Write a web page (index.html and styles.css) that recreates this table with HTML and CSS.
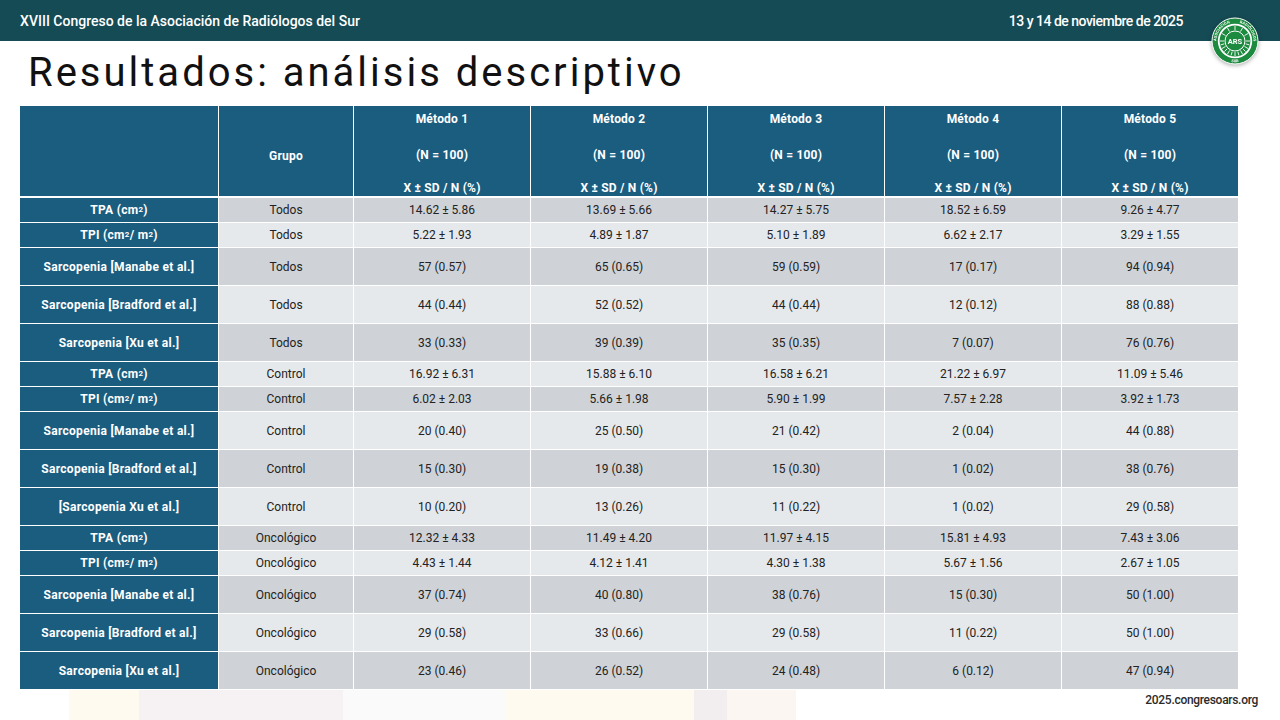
FILE: index.html
```html
<!DOCTYPE html>
<html lang="es">
<head>
<meta charset="utf-8">
<title>Resultados: análisis descriptivo</title>
<link rel="stylesheet" href="styles.css">
</head>
<body>
<div class="slide">
  <header class="topbar">
    <span class="congress">XVIII Congreso de la Asociación de Radiólogos del Sur</span>
    <span class="date">13 y 14 de noviembre de 2025</span>
  </header>
  <svg class="logo" viewBox="0 0 50 50" width="50" height="50">
    <defs>
      <path id="arcTop" d="M 7.52 31.36 A 18.6 18.6 0 1 1 42.48 31.36"/>
      <path id="arcBot" d="M 3.8 25 A 21.2 21.2 0 0 0 46.2 25"/>
    </defs>
    <circle cx="25" cy="25" r="23" fill="#1c8a3f" stroke="#ffffff" stroke-width="1"/>
    <circle cx="25" cy="25" r="16.3" fill="none" stroke="#ffffff" stroke-width="1.8"/>
    <g stroke="#ffffff" stroke-width="0.9">
      <line x1="25" y1="14" x2="25" y2="10"/>
      <line x1="30.5" y1="15.5" x2="32.5" y2="12"/>
      <line x1="34.5" y1="19.5" x2="38" y2="17.5"/>
      <line x1="36" y1="25" x2="40" y2="25"/>
      <line x1="34.5" y1="30.5" x2="38" y2="32.5"/>
      <line x1="30.5" y1="34.5" x2="32.5" y2="38"/>
      <line x1="25" y1="36" x2="25" y2="40"/>
      <line x1="19.5" y1="34.5" x2="17.5" y2="38"/>
      <line x1="15.5" y1="30.5" x2="12" y2="32.5"/>
      <line x1="14" y1="25" x2="10" y2="25"/>
      <line x1="15.5" y1="19.5" x2="12" y2="17.5"/>
      <line x1="19.5" y1="15.5" x2="17.5" y2="12"/>
      <line x1="27.8" y1="35.6" x2="28.9" y2="39.4"/>
      <line x1="22.2" y1="35.6" x2="21.1" y2="39.4"/>
      <line x1="32.8" y1="32.8" x2="35.6" y2="35.6"/>
      <line x1="17.2" y1="32.8" x2="14.4" y2="35.6"/>
      <line x1="35.6" y1="27.8" x2="39.4" y2="28.9"/>
      <line x1="14.4" y1="27.8" x2="10.6" y2="28.9"/>
    </g>
    <circle cx="25" cy="25" r="10" fill="#1c8a3f" stroke="#ffffff" stroke-width="1"/>
    <text x="25" y="27.8" class="logo-ars">ARS</text>
    <text class="logo-ring"><textPath href="#arcTop" startOffset="26%">ASOCIACIÓN</textPath></text>
    <text class="logo-ring"><textPath href="#arcTop" startOffset="74%">RADIÓLOGOS</textPath></text>
    <text class="logo-ring"><textPath href="#arcBot" startOffset="50%">SUR</textPath></text>
  </svg>

  <h1 class="title">Resultados: análisis descriptivo</h1>

  <div class="table">
    <div class="row head">
      <div class="cell"></div>
      <div class="cell grupo">Grupo</div>
      <div class="cell method"><span>Método 1</span><span>(N = 100)</span><span>X ± SD / N (%)</span></div>
      <div class="cell method"><span>Método 2</span><span>(N = 100)</span><span>X ± SD / N (%)</span></div>
      <div class="cell method"><span>Método 3</span><span>(N = 100)</span><span>X ± SD / N (%)</span></div>
      <div class="cell method"><span>Método 4</span><span>(N = 100)</span><span>X ± SD / N (%)</span></div>
      <div class="cell method"><span>Método 5</span><span>(N = 100)</span><span>X ± SD / N (%)</span></div>
    </div>
    <div class="body">
      <div class="row s"><div class="cell label">TPA (cm<sup>2</sup>)</div><div class="cell">Todos</div><div class="cell">14.62 ± 5.86</div><div class="cell">13.69 ± 5.66</div><div class="cell">14.27 ± 5.75</div><div class="cell">18.52 ± 6.59</div><div class="cell">9.26 ± 4.77</div></div>
      <div class="row s"><div class="cell label">TPI (cm<sup>2</sup>/ m<sup>2</sup>)</div><div class="cell">Todos</div><div class="cell">5.22 ± 1.93</div><div class="cell">4.89 ± 1.87</div><div class="cell">5.10 ± 1.89</div><div class="cell">6.62 ± 2.17</div><div class="cell">3.29 ± 1.55</div></div>
      <div class="row l"><div class="cell label">Sarcopenia [Manabe et al.]</div><div class="cell">Todos</div><div class="cell">57 (0.57)</div><div class="cell">65 (0.65)</div><div class="cell">59 (0.59)</div><div class="cell">17 (0.17)</div><div class="cell">94 (0.94)</div></div>
      <div class="row l"><div class="cell label">Sarcopenia [Bradford et al.]</div><div class="cell">Todos</div><div class="cell">44 (0.44)</div><div class="cell">52 (0.52)</div><div class="cell">44 (0.44)</div><div class="cell">12 (0.12)</div><div class="cell">88 (0.88)</div></div>
      <div class="row l"><div class="cell label">Sarcopenia [Xu et al.]</div><div class="cell">Todos</div><div class="cell">33 (0.33)</div><div class="cell">39 (0.39)</div><div class="cell">35 (0.35)</div><div class="cell">7 (0.07)</div><div class="cell">76 (0.76)</div></div>
      <div class="row s"><div class="cell label">TPA (cm<sup>2</sup>)</div><div class="cell">Control</div><div class="cell">16.92 ± 6.31</div><div class="cell">15.88 ± 6.10</div><div class="cell">16.58 ± 6.21</div><div class="cell">21.22 ± 6.97</div><div class="cell">11.09 ± 5.46</div></div>
      <div class="row s"><div class="cell label">TPI (cm<sup>2</sup>/ m<sup>2</sup>)</div><div class="cell">Control</div><div class="cell">6.02 ± 2.03</div><div class="cell">5.66 ± 1.98</div><div class="cell">5.90 ± 1.99</div><div class="cell">7.57 ± 2.28</div><div class="cell">3.92 ± 1.73</div></div>
      <div class="row l"><div class="cell label">Sarcopenia [Manabe et al.]</div><div class="cell">Control</div><div class="cell">20 (0.40)</div><div class="cell">25 (0.50)</div><div class="cell">21 (0.42)</div><div class="cell">2 (0.04)</div><div class="cell">44 (0.88)</div></div>
      <div class="row l"><div class="cell label">Sarcopenia [Bradford et al.]</div><div class="cell">Control</div><div class="cell">15 (0.30)</div><div class="cell">19 (0.38)</div><div class="cell">15 (0.30)</div><div class="cell">1 (0.02)</div><div class="cell">38 (0.76)</div></div>
      <div class="row l"><div class="cell label">[Sarcopenia Xu et al.]</div><div class="cell">Control</div><div class="cell">10 (0.20)</div><div class="cell">13 (0.26)</div><div class="cell">11 (0.22)</div><div class="cell">1 (0.02)</div><div class="cell">29 (0.58)</div></div>
      <div class="row s"><div class="cell label">TPA (cm<sup>2</sup>)</div><div class="cell">Oncológico</div><div class="cell">12.32 ± 4.33</div><div class="cell">11.49 ± 4.20</div><div class="cell">11.97 ± 4.15</div><div class="cell">15.81 ± 4.93</div><div class="cell">7.43 ± 3.06</div></div>
      <div class="row s"><div class="cell label">TPI (cm<sup>2</sup>/ m<sup>2</sup>)</div><div class="cell">Oncológico</div><div class="cell">4.43 ± 1.44</div><div class="cell">4.12 ± 1.41</div><div class="cell">4.30 ± 1.38</div><div class="cell">5.67 ± 1.56</div><div class="cell">2.67 ± 1.05</div></div>
      <div class="row l"><div class="cell label">Sarcopenia [Manabe et al.]</div><div class="cell">Oncológico</div><div class="cell">37 (0.74)</div><div class="cell">40 (0.80)</div><div class="cell">38 (0.76)</div><div class="cell">15 (0.30)</div><div class="cell">50 (1.00)</div></div>
      <div class="row l"><div class="cell label">Sarcopenia [Bradford et al.]</div><div class="cell">Oncológico</div><div class="cell">29 (0.58)</div><div class="cell">33 (0.66)</div><div class="cell">29 (0.58)</div><div class="cell">11 (0.22)</div><div class="cell">50 (1.00)</div></div>
      <div class="row l"><div class="cell label">Sarcopenia [Xu et al.]</div><div class="cell">Oncológico</div><div class="cell">23 (0.46)</div><div class="cell">26 (0.52)</div><div class="cell">24 (0.48)</div><div class="cell">6 (0.12)</div><div class="cell">47 (0.94)</div></div>
    </div>
  </div>

  <footer class="footer">2025.congresoars.org</footer>
</div>
</body>
</html>
```

FILE: styles.css
```css
* { box-sizing: border-box; }

html, body {
  margin: 0;
  padding: 0;
}

body {
  width: 1280px;
  height: 720px;
  overflow: hidden;
  background-color: #ffffff;
  font-family: Roboto, "Liberation Sans", sans-serif;
  color: #222222;
}

.slide {
  position: relative;
  width: 1280px;
  height: 720px;
  display: flex;
  flex-direction: column;
  background:
    linear-gradient(to right,
      #ffffff 0, #ffffff 69px,
      #fffaf0 69px, #fffaf0 139px,
      #f6f1f2 139px, #f6f1f2 343px,
      #fbfafa 343px, #fbfafa 506px,
      #fffaf0 506px, #fffaf0 694px,
      #f2eef0 694px, #f2eef0 727px,
      #fcf6f2 727px, #fcf6f2 796px,
      #ffffff 796px, #ffffff 1280px) left bottom / 1280px 30px no-repeat,
    #ffffff;
}

/* Top bar */
.topbar {
  height: 41px;
  flex: 0 0 41px;
  background-color: #154b55;
  color: #ffffff;
  display: flex;
  align-items: center;
  justify-content: space-between;
  padding: 0 97px 0 20px;
  font-size: 14px;
  font-weight: 500;
}

.congress {
  letter-spacing: 0;
}

.date {
  letter-spacing: -0.5px;
}

.logo {
  position: absolute;
  left: 1210px;
  top: 16px;
  filter: drop-shadow(0 1px 2px rgba(0, 0, 0, 0.35));
}

.logo-ars {
  font-family: Roboto, "Liberation Sans", sans-serif;
  font-size: 7.5px;
  font-weight: 700;
  fill: #ffffff;
  text-anchor: middle;
}

.logo-ring {
  font-family: Roboto, "Liberation Sans", sans-serif;
  font-size: 3.8px;
  font-weight: 700;
  fill: #ffffff;
  text-anchor: middle;
  letter-spacing: 0.15px;
}

/* Title */
.title {
  margin: 8px 0 0 28px;
  font-family: Roboto, "Liberation Sans", sans-serif;
  font-weight: 400;
  font-size: 40px;
  line-height: 48px;
  letter-spacing: 3px;
  color: #111111;
}

/* Table */
.table {
  margin: 9px 0 0 20px;
  width: 1218px;
  font-size: 12px;
}

.row {
  display: grid;
  grid-template-columns: 198px 134px 176px 176px 176px 176px 176px;
  column-gap: 1px;
  margin-bottom: 1px;
}

.cell {
  display: flex;
  align-items: center;
  justify-content: center;
  text-align: center;
  white-space: nowrap;
}

.head {
  height: 88px;
  margin-bottom: 4px;
}

.head .cell {
  background-color: #1a5d7f;
  color: #ffffff;
  font-weight: 700;
  letter-spacing: 0.2px;
}

.head .method {
  flex-direction: column;
  justify-content: flex-start;
  padding-top: 5px;
  line-height: 16px;
}

.head .method span:nth-child(2) {
  margin-top: 20px;
}

.head .method span:nth-child(3) {
  margin-top: 17px;
}

.head .grupo {
  padding-top: 9px;
}

.body .row.s { height: 24px; }
.body .row.l { height: 37px; }

.body .row:nth-child(odd) .cell { background-color: #cfd3d8; }
.body .row:nth-child(even) .cell { background-color: #e6e9ec; }

.body .row .cell.label {
  background-color: #1a5d7f;
  color: #ffffff;
  font-weight: 700;
  letter-spacing: 0.3px;
}

sup {
  font-size: 8px;
  line-height: 0;
  vertical-align: 4px;
}

/* Footer */
.footer {
  margin-top: auto;
  align-self: flex-end;
  margin-right: 22px;
  margin-bottom: 13px;
  font-size: 12px;
  font-weight: 500;
  letter-spacing: -0.3px;
  color: #2b2b2b;
}
```
